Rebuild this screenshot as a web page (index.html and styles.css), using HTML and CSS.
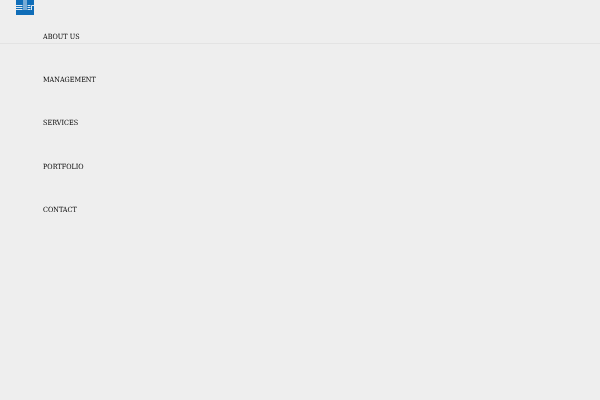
FILE: index.html
```html
<html>
<head>
<meta http-equiv="Content-Type" content="text/html; charset=UTF-8">
<link rel="stylesheet" href="styles.css">
</head>
<body>
<div class="logo">
  <svg width="18" height="15" viewBox="0 0 18 15">
    <rect width="18" height="15" fill="#0f6db8"/>
    <path d="M0 5.5h6.5M0 7.5h6.5M0 9.5h6.5M8 0v10M10 0v10M11.5 5.5h3M11.5 7.5h3M11.5 9.5h3M15.5 10V5.5H18" stroke="#dfe9f2" stroke-width="1" fill="none"/>
  </svg>
</div>
<ul class="menu">
  <li class="first">ABOUT US</li>
  <li>MANAGEMENT</li>
  <li>SERVICES</li>
  <li>PORTFOLIO</li>
  <li>CONTACT</li>
</ul>
</body>
</html>
```

FILE: styles.css
```css
body {
  background: #eeeeee;
  margin: 0;
  padding: 0;
}
.logo {
  height: 15px;
  padding-left: 16px;
}
.logo svg {
  display: block;
}
.menu {
  list-style: none;
  margin: 0;
  padding: 0;
  will-change: opacity;
}
.menu li {
  font-family: "DejaVu Serif Condensed", "DejaVu Serif", serif;
  font-size: 7.2px;
  line-height: 10px;
  color: #000000;
  padding: 16.66px 0 16.67px 43px;
}
.menu li.first {
  padding-top: 17px;
  padding-bottom: 1px;
  margin-bottom: 14.33px;
  border-bottom: 1px solid #e3e3e3;
}
```
